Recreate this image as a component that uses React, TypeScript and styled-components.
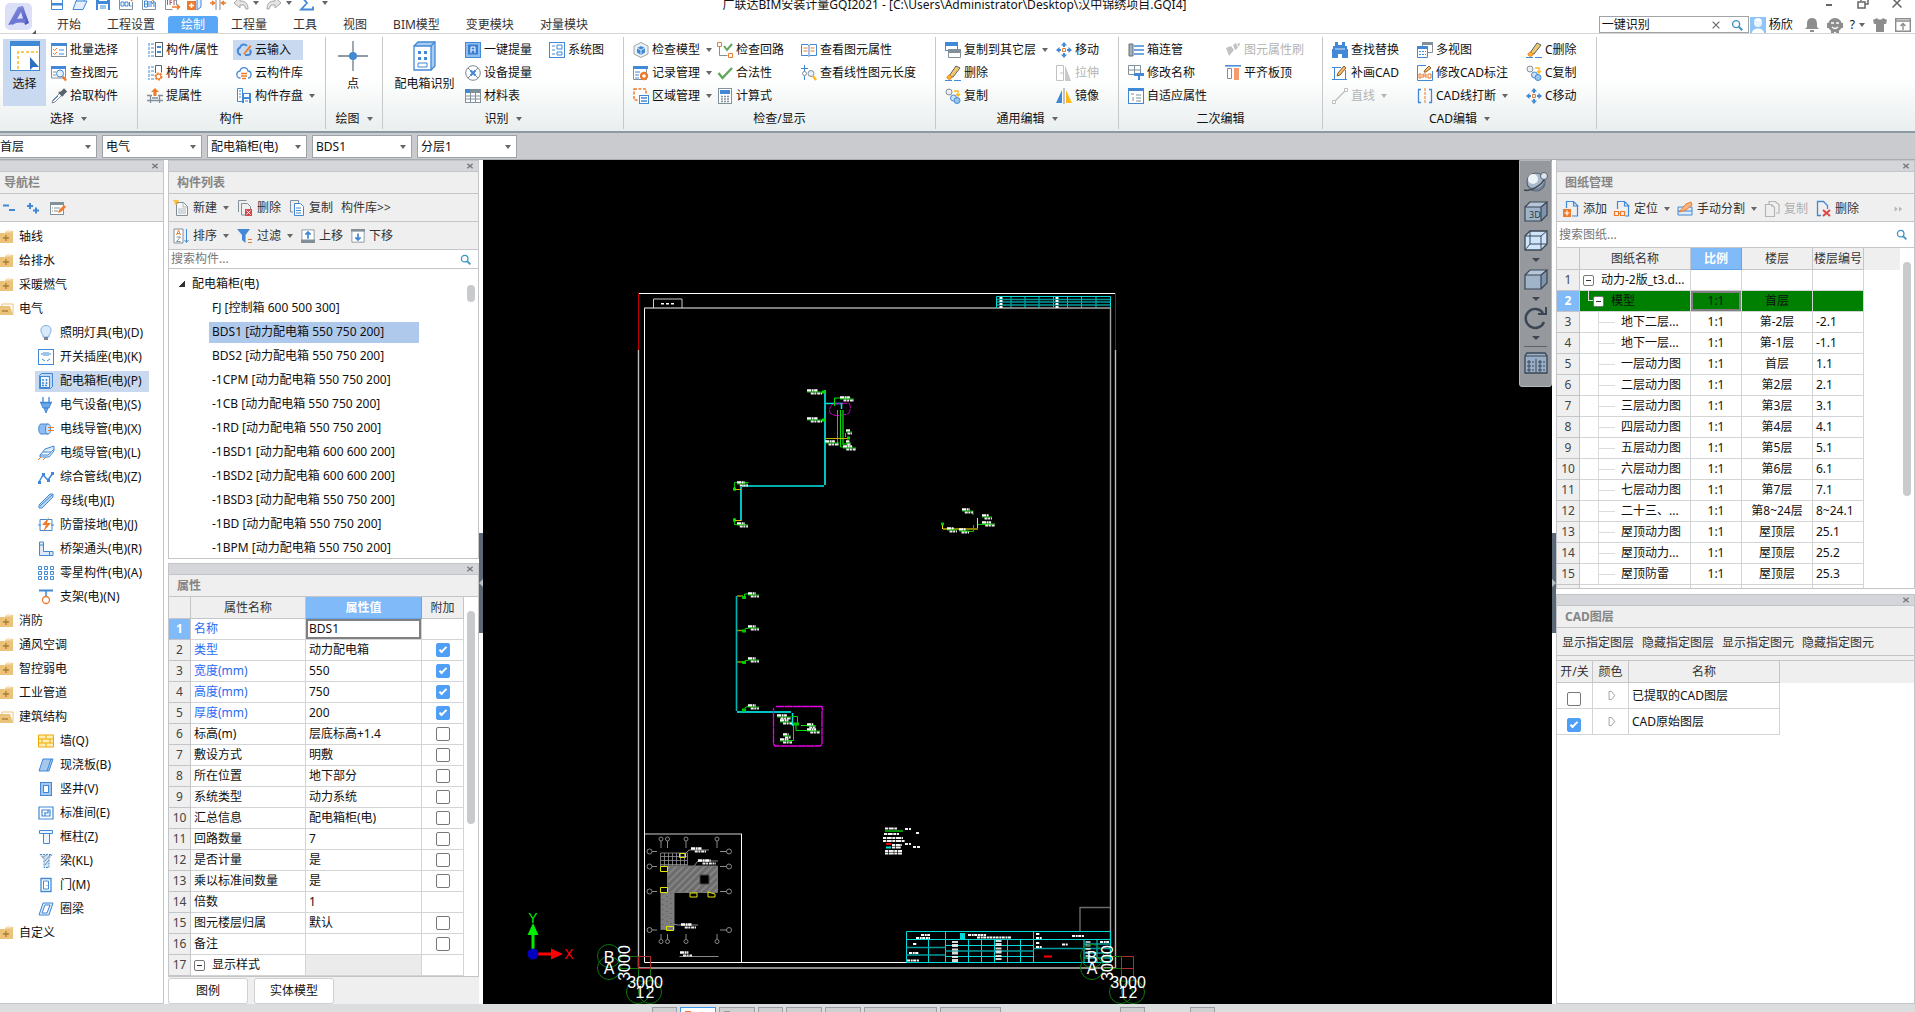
import React, { useState } from "react";
import styled, { createGlobalStyle, css } from "styled-components";

const B = "#4189d6";
const O = "#ee7b2b";
const G = "#82909a";
const Y = "#ffb81c";
const LINE = "#c3c5c9";

const GlobalStyle = createGlobalStyle`
  *, *::before, *::after { box-sizing: border-box; }
  html, body, #root { height: 100%; }
  body {
    margin: 0;
    overflow: hidden;
    background: #fff;
    color: #111;
    font: 12px/16px "Noto Sans", "Noto Sans CJK SC", sans-serif;
  }
  button, input, select { font: inherit; color: inherit; margin: 0; }
  button { border: 0; background: none; padding: 0; white-space: nowrap; }
`;

/* ---------- icons ---------- */

const cube = (
  <>
    <path d="M1 7h16v14H1z" fill="#9fb3c9" /><path d="M1 7l5-5h17l-6 5z" fill="#b6c6d8" /><path d="M23 2v13l-6 6V7z" fill="#7f93aa" />
    <path d="M1 7h16v14H1zM1 7l5-5h17l-6 5M23 2v13l-6 6" fill="none" stroke="#3b4654" strokeWidth="1.200" />
  </>
);

const icons: Record<string, React.ReactNode> = {
  qNew: <><path d="M2.500 1v13.500h11v-10l-3-3.500z" fill="#fff" stroke={B} /><path d="M3 8h10v2.500H3z" fill={B} /></>,
  qOpen: <path d="M1 14.500 4 6l4-4h6l-2 4h3l-4 8.500zM4 6h8" fill="#e4effb" stroke={B} />,
  qSave: <><path d="M1 1h14v14H1z" fill={B} /><path d="M4 2h8v4H4zM3 9h10v6H3z" fill="#fff" /><path d="M5 11h6M5 13h6" stroke={B} /></>,
  qGql: <><path d="M12 1H1.500v13.500h13V7" fill="none" stroke={G} /><path d="M3 7h3v4H3zM7 7h3v4H7zM11.500 7v4h2" fill="none" stroke={B} /><path d="M10 4h4M13 2l2 2-2 2" stroke={O} fill="none" strokeWidth="1.500" /></>,
  qBim: <><path d="M10 1H1.500v13.500h13V7" fill="none" stroke={G} /><path d="M3.500 6v6h3V6zM3 9h3M8 6v6M10 12V6l1.500 3L13 6v6" fill="none" stroke={B} /><path d="M12 1v5M10 3l2-2 2 2" stroke={O} fill="none" strokeWidth="1.500" /></>,
  qIfc: <><path d="M1.500 1h11v9M1.500 1v13.500h7" fill="none" stroke={G} /><path d="M3.500 5v5M6 10V5h2M6 7.500h2M12 5h-2v5" fill="none" stroke="#a35b66" /><path d="M8 12h7M13 9.500l2.500 2.500-2.500 2.500" stroke={O} fill="none" strokeWidth="1.500" /></>,
  qAdd: <><path d="M9 1h5v11l-4 3V4" fill="#e4effb" stroke={B} /><rect x="0" y="6" width="9" height="9" fill={O} /><path d="M4.500 8v5M2 10.500h5" stroke="#fff" strokeWidth="1.500" /></>,
  qSplit: <><path d="M6 1v14M10 1v14" stroke={G} /><path d="M0 8h4M2 6l2.500 2L2 10M16 8h-4M14 6l-2.500 2 2.500 2" stroke={O} fill="none" strokeWidth="1.500" /></>,
  undo: <path d="M7 2 1 8l6 5v-3h4l2 4h2c0-5-2-8-8-8z" fill="#e4e4e4" stroke="#a8a8a8" />,
  redo: <path d="M9 2l6 6-6 5v-3H5l-2 4H1c0-5 2-8 8-8z" fill="#e4e4e4" stroke="#a8a8a8" />,
  sum: <path d="M14 4V1H2l6 7-6 6.500h12v-3" fill="none" stroke={B} strokeWidth="1.800" />,
  batch: <><rect x=".5" y="1.500" width="15" height="13" fill="#fff" stroke={G} /><path d="M0 1h16v3H0z" fill={B} /><path d="M2 7l1.500 1.500L6 6M2 11l1.500 1.500L6 10" stroke={O} fill="none" /><path d="M8 8h5M8 12h5" stroke={B} /></>,
  find: <><path d="M.5 2h14v11H.5z" fill="#fff" stroke={G} /><path d="M0 1h15v3H0z" fill={B} /><path d="M2 7h3M2 10h3" stroke={G} /><circle cx="9" cy="8.500" r="3.500" fill="#e7f1fc" stroke={B} /><path d="M11.500 11.500l3.500 4" stroke={O} strokeWidth="2.400" /></>,
  pick: <><path d="M1 15l1-3 7-7 2 2-7 7z" fill="#fff" stroke={G} /><path d="M8 4l4 4M10 5l3-3 1.500 1.500-3 3" stroke="#59656e" strokeWidth="2.400" /><path d="M2 13l5-5" stroke={B} /></>,
  compProp: <><path d="M4 2h4M4 6h4M4 10h4M4 14h4M2 1v14" stroke={B} strokeDasharray="3 1" fill="none" /><rect x="8.500" y=".5" width="7" height="14" fill="#fff" stroke="#58646c" /><path d="M10 4h4v2h-4zM10 9h4v2h-4z" fill={B} /></>,
  compLib: <><path d="M4 2h3M4 6h3M4 10h3M4 14h3M2 1v14" stroke={B} strokeDasharray="3 1" fill="none" /><path d="M8.500 8V.5h6v7" fill="#fff" stroke="#58646c" /><circle cx="11.500" cy="11.500" r="3" fill="#fff" stroke={O} strokeWidth="2" strokeDasharray="2 1" /><circle cx="11.500" cy="11.500" r="2.500" fill="none" stroke={O} /></>,
  lift: <><path d="M0 7.500h5M11 7.500h5M3.500 7v8M12.500 7v8M0 12.500h16M5 10h6" stroke={G} fill="none" strokeWidth="1.300" /><path d="M8 0l4 4H9.500v4h-3V4H4z" fill={O} /></>,
  cloudIn: <><path d="M5 13a4 4 0 0 1-1-7.500C5 2 9 1.500 11 4M9 13h3c3 0 3.500-4 1.500-5" stroke={B} fill="none" strokeWidth="2" /><path d="M7 12l7-9 1.500 1.500-7 8z" fill={O} /></>,
  cloudLib: <><path d="M4.500 13a3.500 3.500 0 0 1-.5-7C5 1.500 11 1.500 12 6c4 0 4 7 0 7" stroke={B} fill="none" strokeWidth="1.300" /><path d="M5 8.500h6M5 11h6M6 13.500h4" stroke={O} strokeWidth="1.500" /></>,
  compSave: <><path d="M1.500.5h5v13h-5zM3 3h2M3 6h2M3 9h2" stroke={B} fill="#fff" /><rect x="6" y="5" width="9" height="10" fill={B} /><path d="M8 6h5v3H8zM8 11h5v4H8z" fill="#fff" /><path d="M9 13h3" stroke={B} /></>,
  oneKey: <><rect x=".5" y=".5" width="15" height="15" fill="#8dbcf0" stroke={B} /><rect x="3" y="2.500" width="10" height="10" fill="#3c7fd0" /><path d="M6 11V5h4v6M6 8h4" stroke="#fff" fill="none" /></>,
  device: <><circle cx="8" cy="8" r="7.300" fill="#fff" stroke="#7d8a93" /><path d="M3 3l10 10M13 3L3 13" stroke="#7d8a93" /><path d="M5.500 5.500l5 5M10.500 5.500l-5 5" stroke={B} strokeWidth="2" /></>,
  table: <><rect x=".5" y="1.500" width="15" height="13" fill="#fff" stroke={G} /><path d="M0 1h16v4H0z" fill={G} /><path d="M0 8h16M0 11h16M5.500 4v11M10.500 4v11" stroke={G} /><path d="M0 1h5v4H0z" fill={B} /></>,
  system: <><rect x=".5" y=".5" width="15" height="15" fill="#fff" stroke={B} /><path d="M3 4h3M3 8h3M3 12h3M8 3h5v4H8zM8 10h5v3H8z" stroke={B} fill="none" /></>,
  model: <><path d="M8 .5l7 3.500v8l-7 3.500L1 12V4z" fill="#eef1f3" stroke="#9aa6ae" /><path d="M8 4l4 2v4.500L8 13l-4-2.500V6z" fill={B} /><path d="M4 6l4 2 4-2M8 8v5" stroke="#d6e7fa" fill="none" /></>,
  record: <><path d="M.5 1.500h13v13H.5z" fill="#fff" stroke={G} /><path d="M0 1h15v3H0z" fill={B} /><path d="M2 7h5M2 10h4M2 13h4" stroke={B} /><circle cx="11" cy="11" r="3" fill="#fff" stroke={O} strokeWidth="2.400" /></>,
  region: <><rect x="1" y="1" width="12" height="11" fill="#fff" stroke={O} strokeWidth="1.500" strokeDasharray="3 1.500" /><rect x="6.500" y="7.500" width="9" height="8" fill="#fff" stroke={B} /><path d="M8 10h6M8 13h6" stroke={B} strokeWidth="1.500" /></>,
  circuit: <><path d="M.5.500h4v4h-4zM11.500 11.500h4v4h-4z" fill="#fff" stroke={O} /><path d="M2.500 5v8.500h8" stroke={G} fill="none" /><path d="M7 4l3 4 5-6" stroke="#5fa75a" strokeWidth="2" fill="none" /></>,
  ok: <path d="M1.500 8l4 5L15 3" stroke="#5fa75a" strokeWidth="2.400" fill="none" />,
  calc: <><rect x="1.500" y=".5" width="13" height="15" fill="#fff" stroke={G} /><path d="M3 2h10v4H3z" fill={B} /><path d="M4 8.500h2M7 8.500h2M10 8.500h2M4 11h2M7 11h2M10 11h2M4 13.500h2M7 13.500h2M10 13.500h2" stroke={G} strokeWidth="1.500" /></>,
  book: <><path d="M.5 2.500H7l1 1 1-1h6.500v11H9l-1 1-1-1H.5zM8 3v11" fill="#fff" stroke={B} /><path d="M2.500 6h4M2.500 9h4M9.500 6h4M9.500 9h4" stroke={O} /></>,
  length: <><path d="M3.500 0v15M0 3.500h7" stroke={B} /><circle cx="3.500" cy="8.500" r="2" fill="#fff" stroke={G} /><circle cx="10" cy="8.500" r="3" fill="#e7f1fc" stroke={G} /><path d="M12 11l3 4" stroke={Y} strokeWidth="2.400" /></>,
  copyFloor: <><path d="M.5 1.500h12v7H.5z" fill="#fff" stroke={B} /><path d="M0 0h13v4H0z" fill={B} /><path d="M3.500 8h12v7.500h-12z" fill="#fff" stroke={G} /><path d="M3 7h13v4H3z" fill={G} /></>,
  erase: <><path d="M4 11l7-10 4 2-7 9z" fill="#f1c86a" stroke="#57636c" /><path d="M2 13c0-3 3-4 5-1-1 3-3 3-5 1z" fill={Y} stroke={O} /><path d="M0 15.500h7M9 15.500h7" stroke={B} /></>,
  dup: <><circle cx="4" cy="4" r="3" fill="#eee" stroke={G} /><path d="M9 3h4v4M11 6l2 2 2-2" stroke={Y} fill="none" strokeWidth="1.300" /><circle cx="8.500" cy="10" r="3" fill="#cfe1f7" stroke={B} /><circle cx="12" cy="12.500" r="3" fill="#9cc4f1" stroke={B} /></>,
  move: <><path d="M8 0l3 3.500H9V5H7V3.500H5zM8 16l3-3.500H9V11H7v1.500H5zM0 8l3.500-3v2H5v2H3.500v2zM16 8l-3.500-3v2H11v2h1.500v2z" fill={B} /><path d="M6.500 6.500h3v3h-3z" fill="#fff" stroke={O} /></>,
  stretch: <><path d="M.5.500h7v15h-7zM4 8h4" fill="none" stroke="#c2c2c2" /><path d="M9 0l6 16H9z" fill="#c8c8c8" /></>,
  mirror: <><path d="M6 2v13H0z" fill={B} /><path d="M10 2v13h6z" fill={Y} /><path d="M8 0v16" stroke={G} /></>,
  pipe: <><path d="M1 2h4v12H1z" fill="#a4afb6" stroke="#64717a" /><path d="M6 4h10M6 8h10M6 12h10" stroke={B} strokeWidth="1.300" /></>,
  rename: <><path d="M.5.500h12v9H.5zM.5 5h12M6.500 0v10" fill="#fff" stroke={G} /><path d="M6 8h10v3h-4v4h-2v-4H6z" fill={B} /></>,
  adapt: <><rect x=".5" y=".5" width="15" height="15" fill="#fff" stroke={B} /><path d="M0 0h16v3H0z" fill={B} /><path d="M3 6h3M5 9v4M8 7h5M8 10h5M8 13h5" stroke={G} /></>,
  brush: <path d="M1 6l5-2 3 4-5 6zM8 3l3-2 2 5-3 2zM12 2l3-1-1 4" fill="#c2c2c2" />,
  align: <><path d="M0 .8h16" stroke={B} strokeWidth="1.500" /><path d="M2.500 3.500h4v10h-4z" fill="#fff" stroke={G} /><path d="M9 3h5v12H9z" fill="#f79a6d" /></>,
  binoc: <><path d="M3 0h3v3h4V0h3v4h2v3h1v9h-6v-4H6v4H0V7h1V4h2z" fill={B} /><path d="M3 7h10" stroke="#cfe1f7" /></>,
  drawCad: <><path d="M2.500 2v12.500h11V5M0 2.500h9M0 14.500h15" fill="none" stroke={B} /><path d="M5 11l1-3 6-7 2 2-6 7z" fill="#f5bd72" stroke="#8c5a24" /></>,
  line: <><path d="M3 13L13 3" stroke="#bdbdbd" strokeWidth="1.300" /><path d="M.5 12.500h3v3h-3zM12.500.500h3v3h-3z" fill="#fff" stroke="#bdbdbd" /></>,
  views: <><path d="M5.500.500h10v10h-10z" fill="#fff" stroke={G} /><path d="M5 0h11v3H5z" fill={G} /><path d="M.5 4.500h10v11H.5z" fill="#fff" stroke={B} /><path d="M0 4h11v3H0z" fill={B} /><path d="M2 9.500h7M2 12.500h7" stroke={B} strokeDasharray="2 1" /></>,
  cadMark: <><path d="M9 .500H.5v15h15V6" fill="#fff" stroke={B} /><path d="M4 13V9h-2v4zM6 13V9h3v4M6 11h3M11 13V9h3v4z" fill="none" stroke={O} /><path d="M7 7l1-2 4-4 2 2-5 4z" fill="#f5bd72" stroke="#8c5a24" /></>,
  cadBreak: <><path d="M4 1.500H1.500v13H4M12 1.500h2.500v13H12" fill="none" stroke={B} strokeWidth="1.300" /><path d="M8 0v16" stroke={O} strokeDasharray="3 1" /></>,

  minus2: <path d="M1 5.500h6M7 10h6" stroke={B} strokeWidth="2" />,
  plus2: <path d="M1 6h6M4 3v6M7 10.500h6M10 7.500v6" stroke={B} strokeWidth="2" />,
  editList: <><rect x=".5" y="2.500" width="13" height="12" fill="#fff" stroke={G} /><path d="M0 2h14v3H0z" fill={G} /><path d="M2 8h1M4 8h6M2 11h1M4 11h4" stroke={G} /><path d="M8 13l1-3 5-5 2 2-5 5z" fill={O} /></>,
  folder: <><path d="M0 4h5l1-2h7v12H0z" fill="#eac27a" /><path d="M6 2.500h6" stroke="#f5dfb3" strokeWidth="2" /><path d="M3 9h6M6 6v6" stroke="#a87c2b" strokeWidth="1.300" /></>,
  folderOpen: <><path d="M2 3h11v10H2z" fill="#fff" stroke="#eac27a" /><path d="M0 5h10l3 9H0z" fill="#eac27a" /><path d="M2 10h6" stroke="#a87c2b" strokeWidth="1.300" /></>,
  bulb: <><path d="M5 10C1 6 3 .5 8 .5s7 5.500 3 9.500v2H5z" fill="#d9e9fa" stroke="#7eb0e6" /><path d="M6 12h4v3H6z" fill="#7a858c" /></>,
  socket: <><rect x=".5" y=".5" width="15" height="15" fill="#fff" stroke={B} /><path d="M3 5h2M11 5h2M6 3v4M10 3v4M8 3v4M4 10l3 2M12 10l-3 2" stroke={B} /></>,
  box: <><path d="M1.500 2.500l2-2h11v13l-2 2h-11z" fill="#bcd6f4" stroke={B} /><rect x="2.500" y="3.500" width="9" height="11" fill="#eef5fd" stroke={B} /><path d="M5 6v5M8.500 6v5M4 12.500h6" stroke={B} strokeWidth="1.500" strokeDasharray="2 1" /></>,
  plug: <><path d="M5 0v5M11 0v5M2 5.500h12" stroke={B} strokeWidth="1.300" /><path d="M3 6h10l-2 5H5zM6 11h4l-2 5z" fill="#6fa9ea" stroke={B} /></>,
  wire: <><path d="M3 3h7v10H3c-3 0-3-10 0-10z" fill="#8dbcf0" stroke={B} /><ellipse cx="10" cy="8" rx="2.500" ry="5" fill="#cfe1f7" stroke={B} /><path d="M10 6.500h6M10 9.500h6" stroke={O} /></>,
  cable: <><path d="M2 10l5-6 9-3v5l-5 6H2zM2 10h8l6-6M5 7h8" fill="#dbe9f9" stroke={B} /><path d="M0 15l3-3M5 15l3-3" stroke={O} /></>,
  poly: <><path d="M1 13l4-7 5 5 5-7" stroke={B} fill="none" strokeWidth="1.500" /><path d="M0 12h3v3H0zM4 4h3v3H4zM9 10h3v3H9zM13 3h3v3h-3z" fill={B} /></>,
  bar: <path d="M1 15v-3L12 1h3v3L4 15zM2 13L14 2" fill="#bcd6f4" stroke={B} />,
  ground: <><path d="M2 2.500h12v11H2zM0 8h3M13 8h3" fill="#fff" stroke={B} /><path d="M11 0L4 8h4l-3 7 8-9H9z" fill={O} /></>,
  tray: <><path d="M1.500 1v13.500H15v-4H5.500V1z" fill="#dbe9f9" stroke={B} /><path d="M1 4h5M11.500 10v5" stroke={B} /></>,
  grid: <path d="M.5 1.500h3v3h-3zM6.500 1.500h3v3h-3zM12.500 1.500h3v3h-3zM.5 6.500h3v3h-3zM6.500 6.500h3v3h-3zM12.500 6.500h3v3h-3zM.5 11.500h3v3h-3zM6.500 11.500h3v3h-3zM12.500 11.500h3v3h-3z" fill="#fff" stroke={B} />,
  hanger: <><path d="M1 1.500h14" stroke={B} strokeWidth="2" /><path d="M8 1v6" stroke={B} strokeWidth="1.500" /><circle cx="8" cy="11" r="3.500" fill="#fff" stroke={O} strokeWidth="1.300" /></>,
  wall: <path d="M.5 2h15v12H.5zM.5 6h15M.5 10h15M8 2v4M4 6v4M12 6v4M8 10v4" fill="#ffeeb3" stroke="#f0a800" />,
  slab: <><path d="M1 14L5 2h10l-4 12z" fill="#a6c8ef" stroke={B} /><path d="M13 2L9 14" stroke={B} /></>,
  shaft: <><rect x="2.500" y="1.500" width="11" height="13" fill="#a6c8ef" stroke={B} /><rect x="5.500" y="4.500" width="5" height="7" fill="#fff" stroke={B} /></>,
  room: <path d="M1 2h14v12H1zM4 5h8v6H4zM7 8h3V5M7 7v4" fill="none" stroke={B} strokeWidth="1.200" />,
  column: <path d="M1.500 1.500h13v3h-3v10h-6v-10h-4zM5 4.500h7" fill="#eef5fd" stroke={B} />,
  beam: <><path d="M2 1.500h12l-3 4v9H6v-9z" fill="#d5e5f8" stroke={B} strokeDasharray="2 1" /><path d="M4 5l6-4M7 8l5-6M7 12l4-5" stroke={G} /></>,
  door: <><path d="M3 1.500h10v13H3z" fill="#fff" stroke={B} strokeWidth="1.300" /><path d="M5.500 4h5v8h-5zM9 8v1" fill="none" stroke={B} /></>,
  ring: <><path d="M1 14L5 2h10l-4 12z" fill="#dbe9f9" stroke={B} /><path d="M4 12l3-8h5l-3 8z" fill="#fff" stroke={B} /></>,

  newDoc: <><path d="M3.500 2.500h7l4 4v9h-11z" fill="#f8f8f8" stroke={G} /><path d="M10 2v5h5M5 9h8M5 11h8M5 13h8" stroke={G} strokeOpacity=".6" fill="none" /><path d="M0 1h6M1 4l4-4M1 0l4 4M3 0v5" stroke={Y} /></>,
  delDoc: <><path d="M1.500 12V.5h8M4.500 15V3.500h6l3 3V9M4.500 15H8" fill="none" stroke={G} /><rect x="8" y="9" width="7" height="7" fill="#d8464a" /><path d="M9.500 10.500l4 4M13.500 10.500l-4 4" stroke="#fff" /></>,
  copyDoc: <><path d="M4 12H1.500V.5h8V3" fill="none" stroke={G} /><path d="M5.500 3.500h6l3 3v9h-9z" fill="#fff" stroke={B} /><path d="M7 8h5M7 10.500h5M7 13h5" stroke={B} /></>,
  sort: <><path d="M1 1h9v14H1z" fill="#fff" stroke={G} /><path d="M3.500 7l2-5 2 5M4 5.500h3" stroke={O} fill="none" /><path d="M3.500 9h4l-4 4.500h4" stroke={G} fill="none" /><path d="M13.500 1v13M11.500 12l2 2.500 2-2.500" stroke={B} fill="none" /></>,
  filter: <><path d="M0 1h13L8.500 7v8L5 12V7z" fill={B} /><path d="M11 11.500h4M11 14.500h4" stroke={O} /></>,
  up: <><path d="M1 1h14v14H1z" fill="#fff" stroke={G} /><path d="M0 12h16v4H0z" fill={G} /><path d="M8 11V4M5 6.500L8 3.500l3 3" stroke={B} strokeWidth="2" fill="none" /></>,
  down: <><path d="M1 1h14v14H1z" fill="#fff" stroke={G} /><path d="M0 0h16v3H0z" fill={G} /><path d="M8 5v7M5 9.500l3 3 3-3" stroke={B} strokeWidth="2" fill="none" /></>,
  pageAdd: <><path d="M3.500 7V.5h7l4 4V15H9M10.500 0v5h5" fill="none" stroke={B} strokeWidth="1.200" /><path d="M0 8h8v8H0z" fill={O} /><path d="M4 9.500v5M1.500 12h5" stroke="#fff" strokeWidth="1.200" /></>,
  pageLoc: <><path d="M3.500 8V.5h7l4 4V15H11M10.500 0v5h5" fill="none" stroke={B} strokeWidth="1.200" /><path d="M.5 10.500h4v4h-4zM6.500 10.500h4v4h-4zM4 12.500h3" fill="none" stroke={O} strokeWidth="1.200" /></>,
  cut: <><path d="M1 6h14v8H1zM1 10h14" fill="#dfeaf8" stroke={B} /><path d="M2 11l7-8 5-2 1 3-6 5z" fill="#f7b785" stroke={O} /></>,
  pageCopy: <path d="M5 3V.5h6l4 3V12h-3M10 5H7M1.500 3.500h6l3 3v9h-9z" fill="none" stroke="#b5b5b5" strokeWidth="1.200" />,
  pageDel: <><path d="M6 14.500H2.500v-14h6l4 4V8" fill="none" stroke={B} strokeWidth="1.300" /><path d="M8 9l7 6M15 9l-7 6" stroke="#e04343" strokeWidth="2" /></>,
  search: <><circle cx="7" cy="7" r="4" fill="none" stroke="#3c93c6" strokeWidth="1.600" /><path d="M10 10l4 4" stroke="#3c93c6" strokeWidth="2.200" /></>,
  avatar: <><path d="M0 0h16v16H0z" fill="#8fc4f7" /><circle cx="8" cy="6" r="4" fill="#eaf4fe" /><path d="M2 16c0-6 12-6 12 0zM4 4c1-4 7-4 8 0z" fill="#fff" /></>,
  bell: <path d="M8 1c4 0 5 3 5 6v3l2 2H1l2-2V7c0-3 1-6 5-6zM6 13h4v2H6z" fill="#8d8d8d" />,
  robot: <><circle cx="8" cy="8" r="7" fill="#8d8d8d" /><path d="M0 6h2v5H0zM14 6h2v5h-2zM4 14h3v2H4zM9 14h3v2H9z" fill="#8d8d8d" /><path d="M4 6h3M9 6h3M5 10c2 2 4 2 6 0" stroke="#fff" fill="none" strokeWidth="1.300" /></>,
  shirt: <path d="M1 3l4-2c1 2 5 2 6 0l4 2-1 4h-2v8H4V7H2z" fill="#8d8d8d" />,
  collapse: <><path d="M.7 1.700h14.600v12.600H.7zM1 4h14" fill="#fff" stroke="#8d8d8d" strokeWidth="1.400" /><path d="M8 13V7M5.500 9L8 6.500 10.500 9" stroke="#8d8d8d" fill="none" strokeWidth="1.400" /></>,
  wmin: <path d="M5 10h6" stroke="#666" strokeWidth="2" />,
  wrestore: <path d="M6 6V3h7v6h-3M3 7h7v6H3z" fill="none" stroke="#666" strokeWidth="1.500" />,
  wclose: <path d="M3.500 3.500l9 9M12.500 3.500l-9 9" stroke="#666" strokeWidth="1.500" />,
  x: <path d="M4.500 5l7 6M11.500 5l-7 6" stroke="#777" strokeWidth="1.800" />,
  play: <path d="M5 3h3l4 5-4 5H5z" fill="#fff" stroke="#909090" />,
  more: <path d="M1 4l5 4-5 4zM8 4l5 4-5 4z" fill="#b5b5b5" />,
};

const big: Record<string, React.ReactNode> = {
  select: <><rect x=".5" y=".5" width="29" height="29" fill="#fff" stroke={B} /><path d="M0 0h30v5H0z" fill={B} /><path d="M8 28V11h20" fill="none" stroke={Y} strokeWidth="1.500" strokeDasharray="3 2" /><path d="M20 16v13l3-3h6z" fill="#2f6fc0" /></>,
  point: <><path d="M15 0v30M0 15h30" stroke="#6d7a84" strokeWidth="1.300" /><circle cx="15" cy="15" r="4" fill={B} /></>,
  cabinet: <><path d="M4 5l4-4h17v24l-4 4" fill="#a9cbf0" stroke={B} strokeWidth="1.300" /><path d="M4 5h17v24H4zM21 5l4-4" fill="#fff" stroke={B} strokeWidth="1.300" /><path d="M8 10h3v3H8zM14 10h3v3h-3zM8 16h3v3H8zM14 16h3v3h-3z" fill={B} /><path d="M8 22h9v4H8z" fill="#fff" stroke={B} /></>,
  orbit: <><circle cx="12" cy="11" r="9" fill="#a9b9ca" stroke="#55606c" strokeWidth="1.200" /><circle cx="9" cy="8" r="5" fill="#eef3f8" /><path d="M5 16c5 5 13 2 15-4" stroke="#6d8096" fill="none" strokeWidth="2" /><path d="M0 19c7 2 18-5 21-12" stroke="#3b4654" fill="none" strokeWidth="1.500" /><circle cx="20" cy="5" r="3.500" fill="#dbe3ec" stroke="#55606c" /></>,
  cube3d: <>{cube}<text x="5" y="18" fontSize="9" fill="#2c3540">3D</text></>,
  wireCube: <><path d="M1 7l5-5h17v13l-6 6H1z" fill="#cfe5fb" stroke="#3b4654" strokeWidth="1.300" /><path d="M1 7h16v14M17 7l6-5M6 2v13h17M6 15l-5 6" stroke="#3b4654" fill="none" /></>,
  cube,
  rotate: <><path d="M19 6a9.500 9.500 0 1 0 1 9" fill="none" stroke="#3b4654" strokeWidth="2.400" /><path d="M14 7h8V0" fill="none" stroke="#3b4654" strokeWidth="2" /></>,
  panel: <><path d="M1 4l2-3h18l2 3v17H1z" fill="#98aec6" stroke="#3b4654" strokeWidth="1.300" /><path d="M1 4h22M12 7v13" stroke="#3b4654" /><path d="M4 9h2v2H4zM4 13h2v2H4zM4 17h2v2H4zM15 9h2v2h-2zM15 13h2v2h-2zM15 17h2v2h-2z" fill="none" stroke="#3b4654" /><path d="M8 10h2M8 14h2M8 18h2M19 10h2M19 14h2M19 18h2" stroke="#3b4654" /></>,
};

const Svg = styled.svg`
  display: block;
  flex: none;
  overflow: visible;
`;
const Icon = ({ name, size = 16 }: { name: string; size?: number }) => (
  <Svg width={size} height={size} viewBox="0 0 16 16" aria-hidden="true">{icons[name]}</Svg>
);
const BigIcon = ({ name, size = 30 }: { name: string; size?: number }) => (
  <Svg width={size} height={size} viewBox={`0 0 ${size} ${size}`} aria-hidden="true">{big[name]}</Svg>
);

const Caret = styled.span`
  flex: none;
  border: 3px solid transparent;
  border-top: 4px solid #666;
  border-bottom: 0;
`;

/* ---------- header ---------- */

const Page = styled.div`
  display: flex;
  flex-direction: column;
  height: 100vh;
  min-width: 1100px;
  background: #fff;
`;
const Header = styled.header`
  display: flex;
  flex: none;
  height: 34px;
`;
const LogoBox = styled.div`
  display: flex;
  align-items: center;
  justify-content: center;
  width: 44px;
  padding-right: 6px;
  border-bottom: 1px solid #d5d5d5;
`;
const HeaderMain = styled.div`
  display: flex;
  flex: 1;
  flex-direction: column;
  min-width: 0;
`;
const TitleBar = styled.div`
  display: grid;
  grid-template-columns: 1fr auto 1fr;
  align-items: center;
  height: 26px;
  margin-top: -10px;
`;
const Quick = styled.div`
  display: flex;
  align-items: center;
  gap: 7px;
  padding-left: 5px;
`;
const Title = styled.h1`
  margin: 0 50px 0 0;
  padding-top: 4px;
  font-size: 12px;
  font-weight: 400;
`;
const WinButtons = styled.div`
  display: flex;
  justify-content: flex-end;
  gap: 18px;
  padding-right: 10px;
`;
const IconButton = styled.button`
  display: flex;
  align-items: center;
  gap: 4px;
`;
const TabRow = styled.div`
  display: flex;
  flex: none;
  height: 18px;
  border-bottom: 1px solid #d5d5d5;
`;
const Tab = styled.button<{ $on?: boolean }>`
  padding: 0 13px;
  border-radius: 3px 3px 0 0;
  line-height: 18px;
  color: ${(p) => (p.$on ? "#fff" : "#333")};
  background: ${(p) => (p.$on ? "#59a7f7" : "transparent")};
`;
const Account = styled.div`
  display: flex;
  align-items: center;
  gap: 7px;
  margin-left: auto;
  padding-right: 4px;
`;
const SearchBox = styled.label`
  display: flex;
  align-items: center;
  gap: 8px;
  width: 150px;
  height: 17px;
  padding: 0 4px 0 2px;
  border: 1px solid #a0a4a8;
`;
const PlainInput = styled.input`
  flex: 1;
  min-width: 0;
  padding: 0;
  border: 0;
  outline: 0;
  background: transparent;
  &::placeholder { color: #777; opacity: 1; }
`;
const User = styled.span`
  display: flex;
  align-items: center;
  gap: 3px;
  margin: 0 4px 0 -6px;
`;

/* ---------- ribbon ---------- */

const Ribbon = styled.nav`
  display: flex;
  flex: none;
  height: 99px;
  border-bottom: 2px solid #8b9aa1;
  background: linear-gradient(#fff 45%, #e9eeee);
`;
const Group = styled.section<{ $w: number }>`
  display: flex;
  flex: 0 0 ${(p) => p.$w}px;
  flex-direction: column;
  margin: 3px 0 2px;
  border-right: 1px solid #c6c9cb;
`;
const GroupBody = styled.div<{ $cols: string; $pad: number }>`
  display: grid;
  flex: none;
  grid-template-columns: ${(p) => p.$cols};
  height: 72px;
  padding: 2px 0 0 ${(p) => p.$pad}px;
`;
const GroupLabel = styled.button`
  display: flex;
  flex: none;
  align-items: center;
  justify-content: center;
  gap: 7px;
  height: 20px;
`;
const Col = styled.div`
  display: flex;
  flex-direction: column;
  align-items: flex-start;
  gap: 3px;
  padding-top: 1px;
`;
const Cmd = styled.button<{ $on?: boolean; $off?: boolean }>`
  display: flex;
  align-items: center;
  gap: 3px;
  height: 20px;
  padding: 0 3px;
  color: ${(p) => (p.$off ? "#b4b4b4" : "#111")};
  background: ${(p) => (p.$on ? "#c9daf0" : "transparent")};
  ${Caret} { margin-left: 3px; border-top-color: ${(p) => (p.$off ? "#b4b4b4" : "#666")}; }
  ${(p) => p.$on && css`padding-right: 12px;`}
`;
const BigCmd = styled.button<{ $on?: boolean }>`
  display: flex;
  flex-direction: column;
  align-items: center;
  gap: 5px;
  height: 67px;
  margin-right: 2px;
  padding-top: 2px;
  background: ${(p) => (p.$on ? "#c9daf0" : "transparent")};
`;

type Item = { i: string; t: string; drop?: boolean; on?: boolean; off?: boolean };
type GroupDef = {
  w: number; pad: number; cols: string; label: string; drop?: boolean;
  big?: { i: string; t: string; on?: boolean }; items: Item[][];
};

const groups: GroupDef[] = [
  { w: 138, pad: 3, cols: "45px 85px", label: "选择", drop: true, big: { i: "select", t: "选择", on: true },
    items: [[{ i: "batch", t: "批量选择" }, { i: "find", t: "查找图元" }, { i: "pick", t: "拾取构件" }]] },
  { w: 188, pad: 6, cols: "89px 90px", label: "构件",
    items: [[{ i: "compProp", t: "构件/属性" }, { i: "compLib", t: "构件库" }, { i: "lift", t: "提属性" }],
      [{ i: "cloudIn", t: "云输入", on: true }, { i: "cloudLib", t: "云构件库" }, { i: "compSave", t: "构件存盘", drop: true }]] },
  { w: 57, pad: 0, cols: "56px", label: "绘图", drop: true, big: { i: "point", t: "点" }, items: [] },
  { w: 241, pad: 6, cols: "73px 84px 64px", label: "识别", drop: true, big: { i: "cabinet", t: "配电箱识别" },
    items: [[{ i: "oneKey", t: "一键提量" }, { i: "device", t: "设备提量" }, { i: "table", t: "材料表" }], [{ i: "system", t: "系统图" }]] },
  { w: 312, pad: 6, cols: "84px 84px 130px", label: "检查/显示",
    items: [[{ i: "model", t: "检查模型", drop: true }, { i: "record", t: "记录管理", drop: true }, { i: "region", t: "区域管理", drop: true }],
      [{ i: "circuit", t: "检查回路" }, { i: "ok", t: "合法性" }, { i: "calc", t: "计算式" }],
      [{ i: "book", t: "查看图元属性" }, { i: "length", t: "查看线性图元长度" }]] },
  { w: 183, pad: 6, cols: "111px 60px", label: "通用编辑", drop: true,
    items: [[{ i: "copyFloor", t: "复制到其它层", drop: true }, { i: "erase", t: "删除" }, { i: "dup", t: "复制" }],
      [{ i: "move", t: "移动" }, { i: "stretch", t: "拉伸", off: true }, { i: "mirror", t: "镜像" }]] },
  { w: 204, pad: 6, cols: "97px 90px", label: "二次编辑",
    items: [[{ i: "pipe", t: "箱连管" }, { i: "rename", t: "修改名称" }, { i: "adapt", t: "自适应属性" }],
      [{ i: "brush", t: "图元属性刷", off: true }, { i: "align", t: "平齐板顶" }]] },
  { w: 274, pad: 6, cols: "85px 109px 70px", label: "CAD编辑", drop: true,
    items: [[{ i: "binoc", t: "查找替换" }, { i: "drawCad", t: "补画CAD" }, { i: "line", t: "直线", drop: true, off: true }],
      [{ i: "views", t: "多视图" }, { i: "cadMark", t: "修改CAD标注" }, { i: "cadBreak", t: "CAD线打断", drop: true }],
      [{ i: "erase", t: "C删除" }, { i: "dup", t: "C复制" }, { i: "move", t: "C移动" }]] },
];

/* ---------- selector bar ---------- */

const SelectorBar = styled.div`
  display: flex;
  flex: none;
  gap: 5px;
  height: 27px;
  padding-top: 2px;
  border-bottom: 1px solid #a9acb0;
  background: #c9cbcf;
`;
const Combo = styled.label<{ $w: number }>`
  display: grid;
  grid-template-columns: 1fr 16px;
  align-items: center;
  width: ${(p) => p.$w}px;
  height: 23px;
  border: 1px solid #9fa3a8;
  background: #fff;
  ${Caret} { grid-area: 1 / 2; justify-self: center; pointer-events: none; }
  &:first-child { border-left: 0; select { padding-left: 0; } }
`;
const Select = styled.select`
  grid-area: 1 / 1 / 2 / 3;
  height: 21px;
  padding: 0 0 0 3px;
  border: 0;
  outline: 0;
  appearance: none;
  background: transparent;
`;

/* ---------- panels ---------- */

const Work = styled.main`
  display: flex;
  flex: 1;
  min-height: 0;
`;
const Side = styled.aside<{ $w: number }>`
  display: flex;
  flex: 0 0 ${(p) => p.$w}px;
  flex-direction: column;
  gap: ${(p) => (p.$w > 340 ? 5 : 4)}px;
  min-height: 0;
`;
const PanelBox = styled.section<{ $h?: number }>`
  display: flex;
  flex: ${(p) => (p.$h ? `0 1 ${p.$h}px` : "1 1 0")};
  flex-direction: column;
  min-height: 0;
  border: solid ${LINE};
  border-width: 0 1px 1px;
  background: #fff;
`;
const Strip = styled.div`
  display: flex;
  flex: none;
  align-items: center;
  justify-content: flex-end;
  height: 12px;
  padding-right: 2px;
  border: solid ${LINE};
  border-width: 1px 0;
  background: #d4d6da;
`;
const PanelTitle = styled.h2<{ $pad?: number }>`
  flex: none;
  height: 22px;
  margin: 0;
  padding-left: ${(p) => p.$pad ?? 8}px;
  border-bottom: 1px solid ${LINE};
  background: #efefef;
  color: #858585;
  font-size: 12px;
  line-height: 21px;
`;
const Toolbar = styled.div<{ $gap?: number; $pad?: number; $top?: number }>`
  display: flex;
  flex: none;
  align-items: center;
  gap: ${(p) => p.$gap ?? 8}px;
  height: 28px;
  padding: ${(p) => p.$top ?? 0}px ${(p) => p.$pad ?? 4}px 0;
  border-bottom: 1px solid ${LINE};
  background: #efefef;
`;
const Tool = styled.button<{ $off?: boolean }>`
  display: flex;
  align-items: center;
  gap: 4px;
  color: ${(p) => (p.$off ? "#b0b0b0" : "#333")};
  ${Caret} { margin-left: 2px; }
`;
const Filter = styled.label<{ $h: number }>`
  display: flex;
  flex: none;
  align-items: center;
  height: ${(p) => p.$h}px;
  padding: 0 6px 0 2px;
  border-bottom: 1px solid ${LINE};
  background: #fff;
`;

const Panel = ({ title, h, children }: { title: string; h?: number; children: React.ReactNode }) => (
  <PanelBox $h={h}>
    <Strip><IconButton aria-label={`关闭${title}`}><Icon name="x" size={12} /></IconButton></Strip>
    <PanelTitle>{title}</PanelTitle>
    {children}
  </PanelBox>
);

const Gutter = styled.div<{ $w: number }>`
  display: flex;
  flex: 0 0 ${(p) => p.$w}px;
  flex-direction: column;
  background: #fff;
`;
const Grip = styled.button`
  display: flex;
  flex: none;
  align-items: center;
  justify-content: center;
  width: 100%;
  height: 100px;
  margin-top: 373px;
  background: #5b6875;
`;

const Tree = styled.ul`
  flex: 1;
  min-height: 0;
  margin: 0;
  padding: 3px 0 0;
  overflow: hidden;
  list-style: none;
`;
const TreeRow = styled.li<{ $child?: boolean }>`
  display: flex;
  align-items: center;
  height: 24px;
  padding-left: ${(p) => (p.$child ? 35 : 0)}px;
`;
const TreeButton = styled.button<{ $child?: boolean; $on?: boolean }>`
  display: flex;
  align-items: center;
  gap: ${(p) => (p.$child ? 6 : 3)}px;
  width: ${(p) => (p.$child ? "114px" : "auto")};
  height: 21px;
  padding-left: ${(p) => (p.$child ? 3 : 0)}px;
  background: ${(p) => (p.$on ? "#c9daf0" : "transparent")};
`;
const NavBox = styled(PanelBox)`
  border-left: 0;
`;

const nav: [string, string, 0 | 1][] = [
  ["folder", "轴线", 0], ["folder", "给排水", 0], ["folder", "采暖燃气", 0], ["folderOpen", "电气", 0],
  ["bulb", "照明灯具(电)(D)", 1], ["socket", "开关插座(电)(K)", 1], ["box", "配电箱柜(电)(P)", 1], ["plug", "电气设备(电)(S)", 1],
  ["wire", "电线导管(电)(X)", 1], ["cable", "电缆导管(电)(L)", 1], ["poly", "综合管线(电)(Z)", 1], ["bar", "母线(电)(I)", 1],
  ["ground", "防雷接地(电)(J)", 1], ["tray", "桥架通头(电)(R)", 1], ["grid", "零星构件(电)(A)", 1], ["hanger", "支架(电)(N)", 1],
  ["folder", "消防", 0], ["folder", "通风空调", 0], ["folder", "智控弱电", 0], ["folder", "工业管道", 0], ["folderOpen", "建筑结构", 0],
  ["wall", "墙(Q)", 1], ["slab", "现浇板(B)", 1], ["shaft", "竖井(V)", 1], ["room", "标准间(E)", 1], ["column", "框柱(Z)", 1],
  ["beam", "梁(KL)", 1], ["door", "门(M)", 1], ["ring", "圈梁", 1], ["folder", "自定义", 0],
];

const Scroller = styled.div`
  display: flex;
  flex: 1;
  min-height: 0;
  overflow: hidden;
`;
const Track = styled.div<{ $top: number }>`
  flex: 0 0 14px;
  padding: ${(p) => p.$top}px 3px 0;
  background: #fff;
`;
const Thumb = styled.div<{ $h: number }>`
  height: ${(p) => p.$h}px;
  border-radius: 4px;
  background: #c9cacc;
`;
const PartHead = styled.li`
  display: flex;
  align-items: center;
  gap: 7px;
  height: 24px;
  padding-left: 10px;
`;
const PartRow = styled.li`
  display: flex;
  align-items: center;
  height: 24px;
  padding-left: 40px;
`;
const PartButton = styled.button<{ $on?: boolean }>`
  width: 210px;
  height: 21px;
  padding-left: 3px;
  text-align: left;
  background: ${(p) => (p.$on ? "#afc9ec" : "transparent")};
`;
const OpenMark = styled.span`
  width: 6px;
  height: 6px;
  background: linear-gradient(135deg, transparent 50%, #333 50%);
`;

const parts = [
  "FJ [控制箱 600 500 300]", "BDS1 [动力配电箱 550 750 200]", "BDS2 [动力配电箱 550 750 200]", "-1CPM [动力配电箱 550 750 200]",
  "-1CB [动力配电箱 550 750 200]", "-1RD [动力配电箱 550 750 200]", "-1BSD1 [动力配电箱 600 600 200]", "-1BSD2 [动力配电箱 600 600 200]",
  "-1BSD3 [动力配电箱 550 750 200]", "-1BD [动力配电箱 550 750 200]", "-1BPM [动力配电箱 550 750 200]",
];

/* ---------- data tables ---------- */

const Table = styled.table`
  flex: none;
  align-self: flex-start;
  border-collapse: separate;
  border-spacing: 0;
  table-layout: fixed;
`;
const cell = css`
  overflow: hidden;
  border: solid #d3d4d6;
  border-width: 0 1px 1px 0;
  white-space: nowrap;
  font-weight: 400;
`;
const Th = styled.th<{ $on?: boolean; $w: number }>`
  ${cell}
  width: ${(p) => p.$w}px;
  height: 22px;
  padding: 0;
  border-color: ${(p) => (p.$on ? "#64a5ea" : LINE)};
  background: ${(p) => (p.$on ? "#80baf9" : "#efefef")};
  color: ${(p) => (p.$on ? "#fff" : "#333")};
  font-weight: ${(p) => (p.$on ? 700 : 400)};
`;
const Num = styled.th<{ $on?: boolean }>`
  ${cell}
  height: 21px;
  padding: 0;
  border-color: ${LINE};
  background: ${(p) => (p.$on ? "#80baf9" : "#efefef")};
  color: ${(p) => (p.$on ? "#fff" : "#444")};
  font-weight: ${(p) => (p.$on ? 700 : 400)};
`;
const Td = styled.td<{ $c?: boolean; $blue?: boolean; $gray?: boolean; $focus?: boolean; $green?: boolean; $h?: number; $pad?: number; $low?: boolean }>`
  ${cell}
  height: ${(p) => p.$h ?? 21}px;
  padding: 0 0 0 ${(p) => (p.$c ? 0 : p.$pad ?? 3)}px;
  text-align: ${(p) => (p.$c ? "center" : "left")};
  color: ${(p) => (p.$blue ? "#2b6bf3" : "#111")};
  background: ${(p) => (p.$green ? "#008000" : p.$gray ? "#ebebeb" : "#fff")};
  ${(p) => p.$focus && css`box-shadow: inset 0 0 0 2px #808080;`}
  ${(p) => p.$low && css`padding: 0 2px 2px 0; vertical-align: bottom;`}
`;
const Check = styled.input.attrs({ type: "checkbox" })`
  display: block;
  width: 14px;
  height: 14px;
  margin: 0 auto;
  border: 1px solid #777;
  border-radius: 2px;
  appearance: none;
  background: #fff;
  &:checked { border-color: #4e9ff5; background: #4e9ff5; }
  &:checked::after {
    content: "";
    display: block;
    width: 8px;
    height: 4px;
    margin: 3px 2px;
    border: solid #fff;
    border-width: 0 0 2px 2px;
    transform: rotate(-45deg);
  }
`;
const Fold = styled.button`
  display: grid;
  place-items: center;
  width: 11px;
  height: 11px;
  margin-right: 7px;
  border: 1px solid #777;
  border-radius: 2px;
  background: #fff;
  &::after { content: ""; width: 5px; height: 1px; background: #333; }
`;
const HeadFill = styled.div`
  flex: 1;
  align-self: flex-start;
  height: 22px;
  background: #efefef;
`;
const CellLine = styled.div<{ $pad: number }>`
  display: flex;
  align-items: center;
  height: 20px;
  padding-left: ${(p) => p.$pad}px;
`;
const Branch = styled.span`
  align-self: stretch;
  width: 17px;
  margin-right: 6px;
  border-left: 1px solid #dcdcdc;
  background: linear-gradient(#dcdcdc, #dcdcdc) center / 100% 1px no-repeat;
`;
const Elbow = styled.span`
  align-self: flex-start;
  width: 5px;
  height: 10px;
  border: solid #dcdcdc;
  border-width: 0 0 1px 1px;
`;
const Buttons = styled.div`
  display: flex;
  flex: none;
  gap: 6px;
  margin-top: -4px;
  padding-top: 1px;
  background: #efefef;
`;
const TextButton = styled.button`
  width: 80px;
  height: 26px;
  border: 1px solid #cfd0d2;
  border-radius: 3px;
  background: #fff;
`;
const Gap = styled.div`
  flex: 0 0 5px;
  border-bottom: 1px solid ${LINE};
  background: #efefef;
`;

type Prop = { n: string; v: string; c?: boolean | null; blue?: boolean };
const props: Prop[] = [
  { n: "名称", v: "BDS1", c: null, blue: true }, { n: "类型", v: "动力配电箱", c: true, blue: true },
  { n: "宽度(mm)", v: "550", c: true, blue: true }, { n: "高度(mm)", v: "750", c: true, blue: true },
  { n: "厚度(mm)", v: "200", c: true, blue: true }, { n: "标高(m)", v: "层底标高+1.4", c: false },
  { n: "敷设方式", v: "明敷", c: false }, { n: "所在位置", v: "地下部分", c: false }, { n: "系统类型", v: "动力系统", c: false },
  { n: "汇总信息", v: "配电箱柜(电)", c: false }, { n: "回路数量", v: "7", c: false }, { n: "是否计量", v: "是", c: false },
  { n: "乘以标准间数量", v: "是", c: false }, { n: "倍数", v: "1", c: null }, { n: "图元楼层归属", v: "默认", c: false },
  { n: "备注", v: "", c: false },
];
const sheets: [string, string, string][] = [
  ["地下二层...", "第-2层", "-2.1"], ["地下一层...", "第-1层", "-1.1"], ["一层动力图", "首层", "1.1"], ["二层动力图", "第2层", "2.1"],
  ["三层动力图", "第3层", "3.1"], ["四层动力图", "第4层", "4.1"], ["五层动力图", "第5层", "5.1"], ["六层动力图", "第6层", "6.1"],
  ["七层动力图", "第7层", "7.1"], ["二十三、...", "第8~24层", "8~24.1"], ["屋顶动力图", "屋顶层", "25.1"],
  ["屋顶动力...", "屋顶层", "25.2"], ["屋顶防雷", "屋顶层", "25.3"],
];

/* ---------- drawing area ---------- */

const Viewport = styled.div`
  position: relative;
  flex: 1;
  min-width: 0;
  overflow: hidden;
  background: #000;
`;
const Drawing = styled.svg`
  display: block;
  width: 100%;
  height: 100%;
`;
const ViewTools = styled.div`
  position: absolute;
  top: 0;
  right: 0;
  display: flex;
  flex-direction: column;
  align-items: center;
  width: 33px;
  height: 227px;
  padding-top: 10px;
  border: 1px solid #b4b7bb;
  border-radius: 0 0 3px 3px;
  background: #95989d;
  ${Caret} { margin: 5px 0 6px; border-width: 4px 4px 0; border-top-color: #3b4654; }
`;
const ViewButton = styled.button<{ $space?: number }>`
  margin-bottom: ${(p) => p.$space ?? 0}px;
`;
const Divider = styled.hr`
  width: 23px;
  margin: 0 0 5px;
  border: 0;
  border-top: 1px solid #5e6369;
`;

/* Illegible annotation: two broken strokes with a green leader between them. */
const Note = ({ x, y, w = 13, leader = true }: { x: number; y: number; w?: number; leader?: boolean }) => (
  <g fill="none">
    <path d={`M${x} ${y - 1.5}h${w * 0.7}`} stroke="#fff" strokeWidth="2.400" strokeDasharray="4 .6 2 .5" />
    {leader && <path d={`M${x} ${y}h${w}`} stroke="#0c0" />}
    <path d={`M${x + w * 0.25} ${y + 1.5}h${w * 0.75}`} stroke="#ececec" strokeWidth="2" strokeDasharray="3 .6 2 .8" />
  </g>
);

const AxisMark = ({ dx }: { dx: number }) => (
  <g transform={`translate(${dx} 0)`} fontFamily="Liberation Sans, sans-serif" fontSize="16" fill="#fff" textAnchor="middle">
    <g fill="none" stroke="#0a7a0a">
      <circle cx="609" cy="956" r="11.500" /><circle cx="609" cy="968" r="11.500" />
      <circle cx="638" cy="992" r="11.500" /><circle cx="650" cy="992" r="11.500" />
      <path d="M621 956.500h17M621 968.500h17M638.500 968v12M650.500 968v12" />
      <path d="M638.500 956.500h12v12h-12z" stroke="#b03030" />
    </g>
    <text x="609" y="963">B</text><text x="609" y="974">A</text>
    <text x="645" y="988">3000</text>
    <text x="640" y="998">1</text><text x="650" y="998">2</text>
    <text transform="translate(630 963) rotate(-90)">3000</text>
  </g>
);

const CadDrawing = () => (
  <Drawing viewBox="483 160 1069 844" preserveAspectRatio="xMidYMid meet" role="img" aria-label="配电系统图">
    <defs>
      <pattern id="mesh" width="4" height="4" patternUnits="userSpaceOnUse">
        <path d="M0 0h4M0 0v4" stroke="#999" strokeWidth="1.600" />
      </pattern>
      <pattern id="hatch" width="5" height="5" patternUnits="userSpaceOnUse" patternTransform="rotate(45)">
        <path d="M0 0h5v5H0z" fill="#6c6c6c" /><path d="M1 0v5" stroke="#8c8c8c" strokeWidth="1.500" />
      </pattern>
    </defs>
    <g fill="none">
      <path d="M639 293.500h477" stroke="#fff" />
      <path d="M638.500 293v57M1115.500 293v57" stroke="#c00000" />
      <path d="M638.500 350v618M1115.500 350v618M639 968h477" stroke="#bdbdbd" strokeWidth="1.400" />
      <path d="M644.500 308v654.500h466" stroke="#fff" />
      <path d="M644 308h466.500v655" stroke="#a5a5a5" strokeWidth="1.400" />
      <path d="M653.500 308v-9h28.500v9" stroke="#ccc" />
      <path d="M661 303.800h13" stroke="#fff" strokeWidth="1.500" strokeDasharray="3 2" />
      <path d="M996.500 308v-11.500h114v11.500M1011 297v11M1025 297v11M1039 297v11M1053.500 297v11M1067.500 297v11M1081.500 297v11M1096 297v11" stroke="#00dada" />
      <path d="M997 299.500h113M997 302h113M997 305h113" stroke="#009a9a" strokeWidth="1.500" />
      <path d="M1001 297v11M1057 297v11" stroke="#fff" strokeWidth="3" strokeDasharray="2 1" />

      <path d="M825 390v95" stroke="#00c4c4" strokeWidth="2" />
      <path d="M742 486h82M826 403.500h17M841.500 404v5" stroke="#00e5e5" strokeWidth="1.500" />
      <path d="M741 487v34" stroke="#00c4c4" strokeWidth="2" />
      <path d="M833 404c-3 3-4 5-3 9 4 3 8 3 12 2l6-1c3-4 3-7 1-11z" stroke="#c800c8" strokeDasharray="6 1" />
      <path d="M834.500 406v-8h16M837.500 410v34M840.500 410v37h12M845.500 437v-4" stroke="#00e000" />
      <path d="M843 410v34h6" stroke="#009000" strokeWidth="2" />
      <path d="M826 438.500h24" stroke="#c8b400" />
      <path d="M734.500 491v-8.500h14M734.500 518v6.500h12" stroke="#00c800" />
      <path d="M733 489h3M733 520h3M822 392h3M822 420h3M847 438h3" stroke="#00e000" strokeWidth="3" />
      <path d="M735 489.500h6M735 520.500h6" stroke="#d0c000" />
      <path d="M942.500 524v5M977.500 518v11" stroke="#ffe600" />
      <path d="M943 529h35" stroke="#8a8000" strokeWidth="2" />
      <path d="M941 524h3" stroke="#00c800" strokeWidth="3" />
      <path d="M978 524.500h14M973.500 525v6.500h-12M973 515v-4" stroke="#00c800" />

      <path d="M736.500 596v115" stroke="#00b4b4" strokeWidth="1.600" />
      <path d="M737 712h54" stroke="#00c4c4" strokeWidth="2" />
      <path d="M737 596h6M737 630.500h6M737 662h6" stroke="#a09000" strokeWidth="1.500" />
      <path d="M742 597.500h4M742 631h4M742 662.500h4M742 710h4" stroke="#00c800" strokeWidth="3" />
      <path d="M744.500 597v-3h8M744.500 629l4-1M744.500 661l4-1M744.500 708l4-2" stroke="#00e000" />
      <path d="M776 706.500h46v1q1 1 0 3v34l-2 1.500h-45l-1.500-2V708" stroke="#e800e8" strokeWidth="1.300" strokeDasharray="8 .4" />
      <path d="M792.500 713v13" stroke="#00e5e5" strokeWidth="1.500" />
      <path d="M792 716.500h5.500v7h-4v17h-6M796 724v6.500h20M801 725.500h14" stroke="#00e000" />
      <path d="M794 724h5" stroke="#00c800" strokeWidth="3" />
    </g>
    <Note x={807} y={392} w={15} /><Note x={807} y={420} w={15} />
    <Note x={840} y={399} w={14} /><Note x={846} y={432} w={6} /><Note x={825} y={443} w={14} />
    <Note x={846} y={443} w={5} /><Note x={843} y={448} w={13} />
    <Note x={737} y={484} w={11} /><Note x={737} y={525} w={11} />
    <Note x={962} y={511} w={11} /><Note x={982} y={517} w={10} /><Note x={982} y={524} w={13} />
    <Note x={947} y={530} w={10} /><Note x={959} y={531} w={10} />
    <Note x={748} y={595} w={11} /><Note x={748} y={628} w={11} /><Note x={748} y={660} w={11} /><Note x={748} y={707} w={11} />
    <Note x={777} y={717} w={14} /><Note x={780} y={722} w={12} /><Note x={783} y={736} w={8} /><Note x={780} y={741} w={12} />
    <Note x={807} y={726} w={9} /><Note x={807} y={731} w={13} />

    <g fill="none">
      <path d="M645 834h97" stroke="#8a8a8a" strokeWidth="1.600" />
      <path d="M741.500 834v128" stroke="#fff" />
      <path d="M660.500 853h27v13h-27z" fill="url(#mesh)" stroke="#777" />
      <path d="M667.500 866h50v26.500h-50z" fill="url(#hatch)" stroke="#777" />
      <path d="M660.500 892h14v38h-14z" fill="#7d7d7d" />
      <path d="M663 894v36M667 896v34M671 893v36" stroke="#555" strokeDasharray="1 4" />
      <path d="M700 875h9v9h-9z" fill="#000" stroke="#444" />
      <g stroke="#8a8a8a">
        {[661, 667.5, 686, 717].map((x) => (
          <g key={x}><circle cx={x} cy="839" r="2" /><path d={`M${x} 841v7M${x} 934v5`} /><circle cx={x} cy="941.500" r="2" /></g>
        ))}
        {[851.5, 866.5, 891.5, 930].map((y) => (
          <g key={y}><circle cx="649.500" cy={y} r="2.500" /><path d={`M652 ${y}h5M720 ${y}h7`} /><circle cx="729" cy={y} r="2.500" /></g>
        ))}
        <path d="M684 855l5-5h20M694 866l4-5h20M673 924l5 1h20M679.500 956.500h39" />
      </g>
      <path d="M679.500 853.500h6v4h-6zM660.500 866.500h7v5h-7zM660.500 887.500h7v5h-7zM690 893h7v4h-7zM708 892l7 2v3h-7zM666.500 926.500h7v4h-7z" stroke="#e6e600" />
    </g>
    <Note x={691} y={850} w={15} leader={false} /><Note x={698} y={862} w={18} leader={false} />
    <Note x={681} y={926} w={15} leader={false} /><Note x={680} y={954} w={12} leader={false} />

    <g fill="none" stroke="#f2f2f2" strokeWidth="2">
      <path d="M885 828.500h12M884 834h15M883 838h20M883 841h22M892 845h10M892 847.500h9M885 851h17M885 853.500h17" strokeDasharray="3 .7 5 .6" />
      <path d="M905 829h6M916 833h3M905 844h6M913 847h7" strokeDasharray="3 1" />
      <path d="M885 831h18" stroke="#009000" />
      <path d="M886 844h5" stroke="#e00" />
      <path d="M886 847.500h5" stroke="#0dd" />
    </g>

    <g fill="none">
      <path d="M1110 907.500h-30v24" stroke="#6c6c6c" strokeWidth="1.400" />
      <path d="M906.500 931.500h204v31h-204zM906.500 939.500h204M945.500 931.500v31M1033.500 931.500v31M928.500 940v22M968.500 940v22M981.500 940v22M994.500 940v22M1007.500 940v22M1020.500 940v22M945.500 945.500h88M945.500 956.500h88" stroke="#00dcdc" />
      <path d="M906.500 947.500h39M906.500 955h39M945.500 951h88M1033.500 948.500h77M1084 940v22M1097 940v22M1084 944h26M1084 953h26M1084 958h26" stroke="#009c9c" strokeWidth="1.500" />
      <path d="M960 933h5v6h-5z" fill="#00dcdc" />
      <path d="M968 935h18M977 937.500h34M921 935h9M916 938h14M1036 934h4M1036 938h6M1072 936h12M913 944h4M909 953h10M907 960.500h12M1036 943h4M1036 947h6M1062 944.500h6M1100 942h9" stroke="#fff" strokeWidth="2" strokeDasharray="3 .7 2 .5" />
      <path d="M955 941v21M998.500 940v20" stroke="#fff" strokeWidth="6" strokeDasharray="2 1 3 1.500" strokeOpacity=".85" />
      <path d="M1088 941v18" stroke="#fff" strokeWidth="5" strokeDasharray="2 1.500" strokeOpacity=".7" />
      <path d="M1044 956.500h8" stroke="#f00" strokeWidth="2" />
    </g>
    <AxisMark dx={0} />
    <AxisMark dx={483} />
    <path d="M533 950v-17" stroke="#0e0" strokeWidth="3" /><path d="M533 923l5.500 12h-11z" fill="#0e0" />
    <path d="M537 954h16" stroke="#f00" strokeWidth="3" /><path d="M563 954l-12-5.500v11z" fill="#f00" />
    <circle cx="533" cy="954" r="5.500" fill="#0000c0" />
    <g fontFamily="Liberation Sans, sans-serif" fontSize="14" textAnchor="middle">
      <text x="533" y="923" fill="#0e0">Y</text><text x="569" y="959" fill="#f00">X</text>
    </g>
  </Drawing>
);

/* ---------- status bar ---------- */

const StatusBar = styled.footer`
  display: flex;
  flex: none;
  height: 8px;
  padding: 3px 0 0 652px;
  overflow: hidden;
  background: #dcdddf;
`;
const StatusCell = styled.button<{ $w: number; $ml?: number; $on?: boolean }>`
  flex: 0 0 ${(p) => p.$w}px;
  height: 22px;
  margin-left: ${(p) => p.$ml ?? 3}px;
  border: 1px solid ${(p) => (p.$on ? "#3c96ec" : "#9b9da0")};
  background: ${(p) => (p.$on ? "#fff" : "#cfd0d2")};
`;
const StatusMark = styled.span<{ $on?: boolean }>`
  display: block;
  width: 6px;
  height: 4px;
  margin: 3px 0 14px 4px;
  background: ${(p) => (p.$on ? O : "#9b9da0")};
`;

const quick: [string, string][] = [
  ["qNew", "新建工程"], ["qOpen", "打开工程"], ["qSave", "保存"], ["qGql", "导出GQL"],
  ["qBim", "导出BIM"], ["qIfc", "导出IFC"], ["qAdd", "导入模型"], ["qSplit", "拆分"],
];
const tabs = ["开始", "工程设置", "绘制", "工程量", "工具", "视图", "BIM模型", "变更模块", "对量模块"];
const combos: [string, string][] = [["楼层", "首层"], ["专业", "电气"], ["构件类型", "配电箱柜(电)"], ["构件", "BDS1"], ["分层", "分层1"]];

export default function App() {
  const [part, setPart] = useState(1);
  const [navItem, setNavItem] = useState(6);

  return (
    <Page>
      <GlobalStyle />
      <Header>
        <LogoBox>
          <Svg width="30" height="30" viewBox="0 0 30 30" role="img" aria-label="广联达">
            <defs>
              <linearGradient id="lg" x1="0" y1="0" x2="1" y2="1"><stop offset="0" stopColor="#8fa0ea" /><stop offset="1" stopColor="#4b4fb5" /></linearGradient>
            </defs>
            <rect x="1" y="1" width="27" height="27" rx="5" fill="#dbe0f8" />
            <path d="M14 5l5-1 6 17-4 2-4-13L10 22l-6 1z" fill="url(#lg)" />
            <path d="M8 19c5-3 11-3 14-1l-1 3c-4-1-9-1-13 2z" fill="#6d78d6" />
            <path d="M32 28v4h-4z" fill="#555" />
          </Svg>
        </LogoBox>
        <HeaderMain>
          <TitleBar>
            <Quick>
              {quick.map(([n, label]) => (
                <IconButton key={n} aria-label={label}><Icon name={n} /></IconButton>
              ))}
              <IconButton aria-label="撤销"><Icon name="undo" /><Caret /></IconButton>
              <IconButton aria-label="重做"><Icon name="redo" /><Caret /></IconButton>
              <IconButton aria-label="汇总计算"><Icon name="sum" /></IconButton>
              <IconButton aria-label="更多"><Caret /></IconButton>
            </Quick>
            <Title>广联达BIM安装计量GQI2021 - [C:\Users\Administrator\Desktop\汉中锦绣项目.GQI4]</Title>
            <WinButtons>
              <IconButton aria-label="最小化"><Icon name="wmin" /></IconButton>
              <IconButton aria-label="还原"><Icon name="wrestore" /></IconButton>
              <IconButton aria-label="关闭"><Icon name="wclose" /></IconButton>
            </WinButtons>
          </TitleBar>
          <TabRow>
            {tabs.map((t) => <Tab key={t} $on={t === "绘制"}>{t}</Tab>)}
            <Account>
              <SearchBox>
                <PlainInput aria-label="搜索功能" defaultValue="一键识别" />
                <Icon name="wclose" size={12} />
                <Icon name="search" size={14} />
              </SearchBox>
              <User><Icon name="avatar" />杨欣</User>
              <IconButton aria-label="消息"><Icon name="bell" /></IconButton>
              <IconButton aria-label="客服"><Icon name="robot" /></IconButton>
              <IconButton aria-label="帮助">?<Caret /></IconButton>
              <IconButton aria-label="皮肤"><Icon name="shirt" /></IconButton>
              <IconButton aria-label="收起功能区"><Icon name="collapse" /></IconButton>
            </Account>
          </TabRow>
        </HeaderMain>
      </Header>

      <Ribbon>
        {groups.map((g) => (
          <Group key={g.label} $w={g.w}>
            <GroupBody $cols={g.cols} $pad={g.pad}>
              {g.big && <BigCmd $on={g.big.on}><BigIcon name={g.big.i} />{g.big.t}</BigCmd>}
              {g.items.map((col, k) => (
                <Col key={k}>
                  {col.map((it) => (
                    <Cmd key={it.t} $on={it.on} $off={it.off}><Icon name={it.i} />{it.t}{it.drop && <Caret />}</Cmd>
                  ))}
                </Col>
              ))}
            </GroupBody>
            <GroupLabel>{g.label}{g.drop && <Caret />}</GroupLabel>
          </Group>
        ))}
      </Ribbon>

      <SelectorBar>
        {combos.map(([label, v], k) => (
          <Combo key={label} $w={k ? 100 : 97}>
            <Select aria-label={label} defaultValue={v}><option>{v}</option></Select>
            <Caret />
          </Combo>
        ))}
      </SelectorBar>

      <Work>
        <Side $w={164}>
          <NavBox>
            <Strip><IconButton aria-label="关闭导航栏"><Icon name="x" size={12} /></IconButton></Strip>
            <PanelTitle $pad={4}>导航栏</PanelTitle>
            <Toolbar $pad={2}>
              <IconButton aria-label="全部折叠"><Icon name="minus2" /></IconButton>
              <IconButton aria-label="全部展开"><Icon name="plus2" /></IconButton>
              <IconButton aria-label="编辑"><Icon name="editList" /></IconButton>
            </Toolbar>
            <Tree>
              {nav.map(([icon, text, child], k) => (
                <TreeRow key={text} $child={!!child}>
                  <TreeButton $child={!!child} $on={navItem === k} onClick={() => setNavItem(k)}>
                    <Icon name={icon} />{text}
                  </TreeButton>
                </TreeRow>
              ))}
            </Tree>
          </NavBox>
        </Side>
        <Gutter $w={4} />
        <Side $w={311}>
          <Panel title="构件列表" h={399}>
            <Toolbar>
              <Tool><Icon name="newDoc" />新建<Caret /></Tool>
              <Tool><Icon name="delDoc" />删除</Tool>
              <Tool><Icon name="copyDoc" />复制</Tool>
              <Tool>构件库&gt;&gt;</Tool>
            </Toolbar>
            <Toolbar>
              <Tool><Icon name="sort" />排序<Caret /></Tool>
              <Tool><Icon name="filter" />过滤<Caret /></Tool>
              <Tool><Icon name="up" size={14} />上移</Tool>
              <Tool><Icon name="down" size={14} />下移</Tool>
            </Toolbar>
            <Filter $h={19}><PlainInput aria-label="搜索构件" placeholder="搜索构件..." /><Icon name="search" size={13} /></Filter>
            <Scroller>
              <Tree>
                <PartHead><OpenMark />配电箱柜(电)</PartHead>
                {parts.map((p, k) => (
                  <PartRow key={p}><PartButton $on={part === k} onClick={() => setPart(k)}>{p}</PartButton></PartRow>
                ))}
              </Tree>
              <Track $top={16}><Thumb $h={17} /></Track>
            </Scroller>
          </Panel>
          <Panel title="属性">
            <Scroller>
              <Table>
                <thead>
                  <tr><Th $w={22} /><Th $w={115}>属性名称</Th><Th $w={116} $on>属性值</Th><Th $w={42}>附加</Th></tr>
                </thead>
                <tbody>
                  {props.map((p, k) => (
                    <tr key={p.n}>
                      <Num $on={k === 0}>{k + 1}</Num>
                      <Td $blue={p.blue}>{p.n}</Td>
                      <Td $focus={k === 0}>{p.v}</Td>
                      <Td $c>{p.c !== null && <Check aria-label={`附加${p.n}`} defaultChecked={p.c} />}</Td>
                    </tr>
                  ))}
                  <tr>
                    <Num>17</Num>
                    <Td $pad={0}><CellLine $pad={3}><Fold aria-label="折叠显示样式" />显示样式</CellLine></Td>
                    <Td $gray /><Td />
                  </tr>
                  <tr><Num /><Td /><Td /><Td /></tr>
                </tbody>
              </Table>
              <Track $top={14}><Thumb $h={213} /></Track>
            </Scroller>
          </Panel>
          <Buttons><TextButton>图例</TextButton><TextButton>实体模型</TextButton></Buttons>
        </Side>
        <Gutter $w={4}><Grip aria-label="收起左侧"><Svg width="4" height="8" viewBox="0 0 4 8"><path d="M4 0v8L0 4z" fill="#b9bfc5" /></Svg></Grip></Gutter>

        <Viewport>
          <CadDrawing />
          <ViewTools>
            <ViewButton $space={5} aria-label="动态观察"><BigIcon name="orbit" size={24} /></ViewButton>
            <ViewButton $space={5} aria-label="三维"><BigIcon name="cube3d" size={24} /></ViewButton>
            <ViewButton aria-label="线框"><BigIcon name="wireCube" size={24} /></ViewButton>
            <Caret />
            <ViewButton aria-label="实体"><BigIcon name="cube" size={24} /></ViewButton>
            <Caret />
            <ViewButton aria-label="旋转"><BigIcon name="rotate" size={24} /></ViewButton>
            <Caret />
            <Divider />
            <ViewButton aria-label="显示设置"><BigIcon name="panel" size={24} /></ViewButton>
          </ViewTools>
        </Viewport>

        <Gutter $w={4}><Grip aria-label="收起右侧"><Svg width="4" height="8" viewBox="0 0 4 8"><path d="M0 0v8l4-4z" fill="#b9bfc5" /></Svg></Grip></Gutter>
        <Side $w={359}>
          <Panel title="图纸管理" h={429}>
            <Toolbar $gap={7} $pad={6} $top={3}>
              <Tool><Icon name="pageAdd" />添加</Tool>
              <Tool><Icon name="pageLoc" />定位<Caret /></Tool>
              <Tool><Icon name="cut" />手动分割<Caret /></Tool>
              <Tool $off><Icon name="pageCopy" />复制</Tool>
              <Tool><Icon name="pageDel" />删除</Tool>
              <Account><Icon name="more" size={10} /></Account>
            </Toolbar>
            <Filter $h={26}><PlainInput aria-label="搜索图纸" placeholder="搜索图纸..." /><Icon name="search" size={13} /></Filter>
            <Scroller>
              <Table>
                <thead>
                  <tr><Th $w={23} /><Th $w={111}>图纸名称</Th><Th $w={51} $on>比例</Th><Th $w={71}>楼层</Th><Th $w={51}>楼层编号</Th></tr>
                </thead>
                <tbody>
                  <tr>
                    <Num>1</Num>
                    <Td $pad={0}><CellLine $pad={3}><Fold aria-label="折叠图纸" />动力-2版_t3.d...</CellLine></Td>
                    <Td /><Td /><Td />
                  </tr>
                  <tr>
                    <Num $on>2</Num>
                    <Td $green $pad={0}><CellLine $pad={8}><Elbow /><Fold aria-label="折叠模型" />模型</CellLine></Td>
                    <Td $green $c $focus>1:1</Td><Td $green $c>首层</Td><Td $green />
                  </tr>
                  {sheets.map(([n, f, c], k) => (
                    <tr key={c}>
                      <Num>{k + 3}</Num>
                      <Td $pad={0}><CellLine $pad={18}><Branch />{n}</CellLine></Td>
                      <Td $c>1:1</Td><Td $c>{f}</Td><Td>{c}</Td>
                    </tr>
                  ))}
                  <tr><Num /><Td /><Td /><Td /><Td /></tr>
                </tbody>
              </Table>
              <HeadFill />
              <Track $top={14}><Thumb $h={234} /></Track>
            </Scroller>
          </Panel>
          <Panel title="CAD图层">
            <Toolbar $pad={5} $top={2}>
              <Tool>显示指定图层</Tool><Tool>隐藏指定图层</Tool><Tool>显示指定图元</Tool><Tool>隐藏指定图元</Tool>
            </Toolbar>
            <Gap />
            <Scroller>
              <Table>
                <thead><tr><Th $w={36}>开/关</Th><Th $w={36}>颜色</Th><Th $w={151}>名称</Th></tr></thead>
                <tbody>
                  {["已提取的CAD图层", "CAD原始图层"].map((n, k) => (
                    <tr key={n}>
                      <Td $h={26} $c $low><Check aria-label={n} defaultChecked={k === 1} /></Td>
                      <Td $h={26} $pad={12}><IconButton aria-label={`展开${n}`}><Icon name="play" size={13} /></IconButton></Td>
                      <Td $h={26}>{n}</Td>
                    </tr>
                  ))}
                </tbody>
              </Table>
              <HeadFill />
            </Scroller>
          </Panel>
        </Side>
      </Work>

      <StatusBar>
        <StatusCell $w={25} $ml={0} aria-label="显示" />
        <StatusCell $w={36} $on aria-label="捕捉"><StatusMark $on /></StatusCell>
        <StatusCell $w={36} aria-label="交点"><StatusMark /></StatusCell>
        <StatusCell $w={25} aria-label="垂点" />
        <StatusCell $w={36} aria-label="中点" />
        <StatusCell $w={36} aria-label="顶点" />
        <StatusCell $w={73} aria-label="坐标" />
        <StatusCell $w={61} aria-label="偏移" />
        <StatusCell $w={25} $ml={119} aria-label="旋转" />
        <StatusCell $w={25} $ml={45} aria-label="角度" />
      </StatusBar>
    </Page>
  );
}
